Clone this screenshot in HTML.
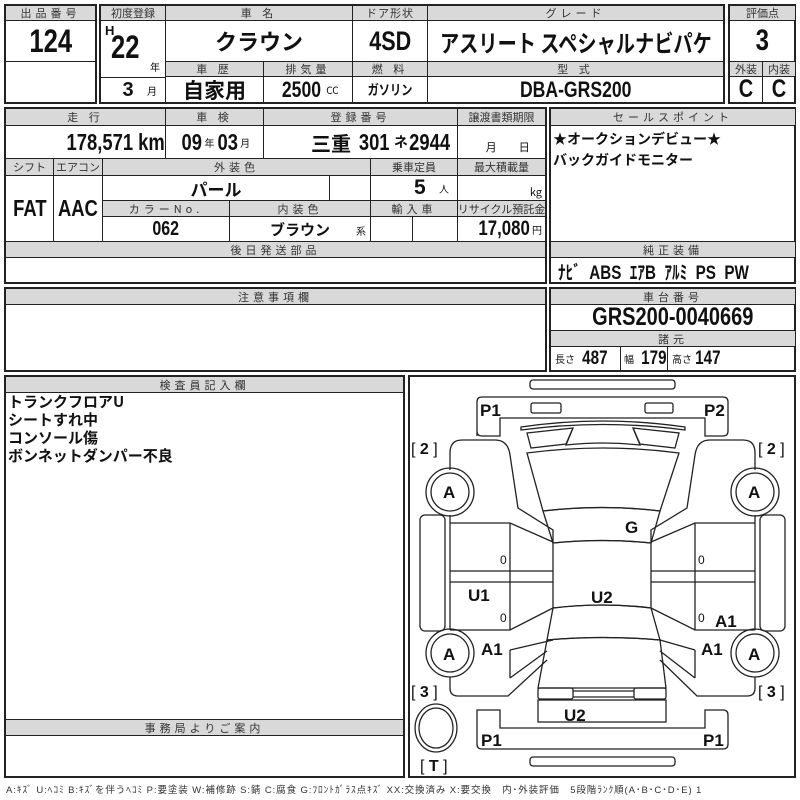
<!DOCTYPE html>
<html><head><meta charset="utf-8"><style>
*{margin:0;padding:0}
body{width:800px;height:800px;background:#fff;position:relative;overflow:hidden;font-family:"Liberation Sans","Noto Sans CJK JP",sans-serif;color:#111}
.c{position:absolute;border:1px solid #222;box-sizing:border-box;display:flex;align-items:center;justify-content:center;overflow:hidden;white-space:nowrap}
.h{background:#d9d9d9;font-size:11px;letter-spacing:4px;color:#333;font-family:"Noto Sans CJK JP",sans-serif}
.b{font-family:"Liberation Sans","Noto Sans CJK JP",sans-serif;font-weight:bold}
.n{display:inline-block;transform:scaleX(.8)}
.j{font-family:"Noto Sans CJK JP",sans-serif;font-weight:bold}
.s{font-size:10px;font-weight:normal;font-family:"Noto Sans CJK JP",sans-serif}
.o{position:absolute;border:2px solid #222;box-sizing:border-box}
</style></head><body>

<div class="o" style="left:4px;top:4px;width:93px;height:100px"></div>
<div class="c h" style="left:5px;top:5px;width:91px;height:16px">出品番号</div>
<div class="c b" style="left:5px;top:20px;width:91px;height:42px;font-size:32px"><span class="n">124</span></div>
<div class="c" style="left:5px;top:61px;width:91px;height:42px"></div>

<div class="o" style="left:99px;top:4px;width:626px;height:100px"></div>
<div class="c h" style="left:100px;top:5px;width:66px;height:16px;letter-spacing:0">初度登録</div>
<div class="c h" style="left:165px;top:5px;width:188px;height:16px">車 名</div>
<div class="c h" style="left:352px;top:5px;width:76px;height:16px;letter-spacing:1px">ドア形状</div>
<div class="c h" style="left:427px;top:5px;width:297px;height:16px">グレード</div>
<div class="c" style="left:100px;top:20px;width:66px;height:58px;display:block">
 <span class="b" style="position:absolute;left:4px;top:2px;font-size:13px">H</span>
 <span class="b n" style="position:absolute;left:10px;top:8px;font-size:32px;transform-origin:left">22</span>
 <span class="s" style="position:absolute;left:49px;top:38px">年</span></div>
<div class="c j" style="left:165px;top:20px;width:188px;height:42px;font-size:22px">クラウン</div>
<div class="c b" style="left:352px;top:20px;width:76px;height:42px;font-size:27px"><span class="n">4SD</span></div>
<div class="c j" style="left:427px;top:20px;width:297px;height:42px;font-size:24px"><span style="display:inline-block;transform:scaleX(0.8)">アスリート スペシャルナビパケ</span></div>
<div class="c h" style="left:165px;top:61px;width:99px;height:16px">車 歴</div>
<div class="c h" style="left:263px;top:61px;width:90px;height:16px">排気量</div>
<div class="c h" style="left:352px;top:61px;width:76px;height:16px">燃 料</div>
<div class="c h" style="left:427px;top:61px;width:297px;height:16px">型 式</div>
<div class="c" style="left:100px;top:77px;width:66px;height:26px;justify-content:flex-end;padding-right:8px"><span class="b" style="font-size:20px">3</span>&nbsp;&nbsp;&nbsp;<span class="s">月</span></div>
<div class="c j" style="left:165px;top:76px;width:99px;height:27px;font-size:21px">自家用</div>
<div class="c" style="left:263px;top:76px;width:90px;height:27px"><span class="b n" style="font-size:22px">2500</span><span class="s">CC</span></div>
<div class="c j" style="left:352px;top:76px;width:76px;height:27px;font-size:14px"><span style="transform:scaleX(.8);display:inline-block">ガソリン</span></div>
<div class="c b" style="left:427px;top:76px;width:297px;height:27px;font-size:22px"><span class="n">DBA-GRS200</span></div>

<div class="o" style="left:728px;top:4px;width:68px;height:100px"></div>
<div class="c h" style="left:729px;top:5px;width:67px;height:16px;letter-spacing:0">評価点</div>
<div class="c b" style="left:729px;top:20px;width:67px;height:42px;font-size:30px"><span class="n">3</span></div>
<div class="c h" style="left:729px;top:61px;width:34px;height:16px;letter-spacing:0">外装</div>
<div class="c h" style="left:762px;top:61px;width:34px;height:16px;letter-spacing:0">内装</div>
<div class="c b" style="left:729px;top:76px;width:34px;height:27px;font-size:25px"><span class="n">C</span></div>
<div class="c b" style="left:762px;top:76px;width:34px;height:27px;font-size:25px"><span class="n">C</span></div>

<div class="o" style="left:4px;top:107px;width:543px;height:177px"></div>
<div class="c h" style="left:5px;top:108px;width:161px;height:18px">走 行</div>
<div class="c h" style="left:165px;top:108px;width:99px;height:18px">車 検</div>
<div class="c h" style="left:263px;top:108px;width:195px;height:18px">登録番号</div>
<div class="c h" style="left:457px;top:108px;width:89px;height:18px;letter-spacing:0">譲渡書類期限</div>
<div class="c b" style="left:5px;top:125px;width:161px;height:34px;font-size:23px;justify-content:flex-end;padding-right:0"><span class="n" style="transform-origin:right">178,571 km</span></div>
<div class="c" style="left:165px;top:125px;width:99px;height:34px"><span class="b n" style="font-size:23px">09</span><span class="s">年</span><span class="b n" style="font-size:23px">03</span><span class="s">月</span></div>
<div class="c" style="left:263px;top:125px;width:195px;height:34px;justify-content:flex-end;padding-right:2px"><span class="j" style="font-size:20px">三重</span>&nbsp;<span class="b n" style="font-size:23px">301</span><span class="j" style="font-size:14px">ネ</span><span class="b n" style="font-size:23px;margin-left:-4px">2944</span></div>
<div class="c s" style="left:457px;top:125px;width:89px;height:34px;align-items:flex-end;padding-bottom:3px;font-size:11px">&nbsp;&nbsp;&nbsp;&nbsp;&nbsp;月&nbsp;&nbsp;&nbsp;&nbsp;&nbsp;&nbsp;&nbsp;&nbsp;&nbsp;日</div>
<div class="c h" style="left:5px;top:158px;width:49px;height:18px;letter-spacing:0">シフト</div>
<div class="c h" style="left:53px;top:158px;width:50px;height:18px;letter-spacing:0">エアコン</div>
<div class="c h" style="left:102px;top:158px;width:269px;height:18px">外装色</div>
<div class="c h" style="left:370px;top:158px;width:88px;height:18px;letter-spacing:0">乗車定員</div>
<div class="c h" style="left:457px;top:158px;width:89px;height:18px;letter-spacing:0">最大積載量</div>
<div class="c b" style="left:5px;top:175px;width:49px;height:67px;font-size:23px"><span class="n">FAT</span></div>
<div class="c b" style="left:53px;top:175px;width:50px;height:67px;font-size:23px"><span class="n">AAC</span></div>
<div class="c j" style="left:102px;top:175px;width:228px;height:26px;font-size:17px">パール</div>
<div class="c" style="left:329px;top:175px;width:42px;height:26px"></div>
<div class="c" style="left:370px;top:175px;width:88px;height:26px;justify-content:flex-end;padding-right:8px"><span class="b" style="font-size:21px">5</span>&nbsp;&nbsp;&nbsp;<span class="s">人</span></div>
<div class="c s" style="left:457px;top:175px;width:89px;height:26px;justify-content:flex-end;padding-right:3px;align-items:flex-end;font-size:11px">kg</div>
<div class="c h" style="left:102px;top:200px;width:128px;height:17px">カラーNo.</div>
<div class="c h" style="left:229px;top:200px;width:142px;height:17px">内装色</div>
<div class="c h" style="left:370px;top:200px;width:88px;height:17px">輸入車</div>
<div class="c h" style="left:457px;top:200px;width:89px;height:17px;letter-spacing:0">リサイクル預託金</div>
<div class="c b" style="left:102px;top:216px;width:128px;height:26px;font-size:20px"><span class="n">062</span></div>
<div class="c" style="left:229px;top:216px;width:142px;height:26px"><span class="j" style="font-size:15px">ブラウン</span><span class="s" style="position:absolute;right:4px;bottom:3px">系</span></div>
<div class="c" style="left:370px;top:216px;width:43px;height:26px"></div>
<div class="c" style="left:412px;top:216px;width:46px;height:26px"></div>
<div class="c" style="left:457px;top:216px;width:89px;height:26px;justify-content:flex-end;padding-right:3px"><span class="b n" style="font-size:21px;margin-right:-4px">17,080</span><span class="s">円</span></div>
<div class="c h" style="left:5px;top:241px;width:541px;height:17px">後日発送部品</div>

<div class="o" style="left:549px;top:107px;width:247px;height:177px"></div>
<div class="c h" style="left:550px;top:108px;width:246px;height:18px">セールスポイント</div>
<div class="j" style="position:absolute;left:553px;top:129px;font-size:14px;line-height:21px">★オークションデビュー★<br>バックガイドモニター</div>
<div class="c h" style="left:550px;top:241px;width:246px;height:17px">純正装備</div>
<div class="b n" style="position:absolute;left:558px;top:258px;font-size:19px;white-space:nowrap;transform-origin:left">ﾅﾋﾞ&nbsp; ABS&nbsp; ｴｱB&nbsp; ｱﾙﾐ&nbsp; PS&nbsp; PW</div>

<div class="o" style="left:4px;top:287px;width:543px;height:85px"></div>
<div class="c h" style="left:5px;top:288px;width:541px;height:17px">注意事項欄</div>
<div class="o" style="left:549px;top:287px;width:247px;height:85px"></div>
<div class="c h" style="left:550px;top:288px;width:246px;height:17px">車台番号</div>
<div class="c b" style="left:550px;top:304px;width:246px;height:27px;font-size:25px"><span class="n">GRS200-0040669</span></div>
<div class="c h" style="left:550px;top:330px;width:246px;height:17px">諸元</div>
<div class="c" style="left:550px;top:346px;width:71px;height:25px;justify-content:flex-start;padding-left:4px"><span class="s">長さ</span>&nbsp;<span class="b n" style="font-size:19px">487</span></div>
<div class="c" style="left:620px;top:346px;width:48px;height:25px;justify-content:flex-start;padding-left:3px"><span class="s">幅</span>&nbsp;<span class="b n" style="font-size:19px">179</span></div>
<div class="c" style="left:667px;top:346px;width:129px;height:25px;justify-content:flex-start;padding-left:4px"><span class="s">高さ</span><span class="b n" style="font-size:19px">147</span></div>

<div class="o" style="left:4px;top:375px;width:401px;height:403px"></div>
<div class="c h" style="left:5px;top:376px;width:399px;height:17px">検査員記入欄</div>
<div class="j" style="position:absolute;left:8px;top:393px;font-size:15px;line-height:18px">トランクフロアU<br>シートすれ中<br>コンソール傷<br>ボンネットダンパー不良</div>
<div class="c h" style="left:5px;top:719px;width:399px;height:17px">事務局よりご案内</div>

<div class="o" style="left:408px;top:375px;width:388px;height:403px"></div>
<svg style="position:absolute;left:0;top:0" width="800" height="800" fill="none" stroke="#222" stroke-width="1.3">
<rect x="530" y="380" width="145" height="9" rx="3"/>
<path d="M477,436 L477,402 Q477,397 482,397 L723,397 Q728,397 728,402 L728,431 Q728,436 723,436 L705,436 L705,418 L500,418 L500,436 L482,436 Q477,436 477,431 Z"/>
<rect x="531" y="403" width="30" height="10" rx="2"/><rect x="645" y="403" width="28" height="10" rx="2"/>
<path d="M521,427 Q603,415 685,427 L685,430 Q603,419 521,430 Z"/>
<path d="M527,433 L573,428 L566,444 L531,448 Z"/><path d="M633,428 L679,433 L675,448 L640,444 Z"/>
<path d="M573,428 L566,445 Q603,441 640,445 L633,428"/>
<path d="M527,453 Q603,443 679,453 L660,511 Q603,504 543,511 Z"/>
<path d="M543,511 Q603,504 660,511 L651,543 Q603,538 553,543 Z"/>
<path d="M553,543 Q603,538 651,543 L651,608 Q603,602 553,608 Z"/>
<path d="M553,608 Q603,602 651,608 L660,640 Q603,635 547,640 Z"/>
<path d="M547,640 Q603,635 660,640 L666,688 L538,688 Z"/>
<rect x="538" y="688" width="35" height="11" rx="2"/><rect x="634" y="688" width="32" height="11" rx="2"/>
<path d="M573,691 L634,691 M573,697 L634,697"/>
<rect x="538" y="700" width="128" height="22"/>
<path d="M477,710 L477,744 Q477,749 482,749 L723,749 Q728,749 728,744 L728,715 Q728,710 723,710 L705,710 L705,728 L500,728 L500,710 Z"/>
<rect x="530" y="757" width="145" height="9" rx="3"/>
<path d="M450,470 L450,453 Q450,440 462,440 L495,440 Q508,440 510,455 L518,508 L553,530 L553,543"/>
<path d="M450,515 L450,630"/>
<path d="M450,523 L510,523 L553,542 M450,571 L553,571 M450,582 L553,582 M450,630 L510,630 L553,608 M510,523 L510,630"/>
<path d="M450,677 L450,688 Q450,696 458,696 L508,696 L547,660 M510,678 L547,651 M510,650 L510,678"/>
<path d="M510,650 L553,640"/>
<rect x="420" y="515" width="25" height="116" rx="5"/>
<path d="M755,470 L755,453 Q755,440 743,440 L710,440 Q697,440 695,455 L687,508 L651,530 L651,543"/>
<path d="M755,515 L755,630"/>
<path d="M755,523 L695,523 L651,542 M755,571 L651,571 M755,582 L651,582 M755,630 L695,630 L651,608 M695,523 L695,630"/>
<path d="M755,677 L755,688 Q755,696 747,696 L697,696 L660,660 M695,678 L660,651 M695,650 L695,678"/>
<path d="M695,650 L660,640"/>
<rect x="760" y="515" width="25" height="116" rx="5"/>
<circle cx="450" cy="492" r="24"/><circle cx="450" cy="492" r="19"/>
<circle cx="755" cy="492" r="24"/><circle cx="755" cy="492" r="19"/>
<circle cx="450" cy="653" r="24"/><circle cx="450" cy="653" r="19"/>
<circle cx="755" cy="653" r="24"/><circle cx="755" cy="653" r="19"/>
<ellipse cx="436" cy="728" rx="21" ry="24"/><ellipse cx="436" cy="728" rx="17" ry="20"/>
<g fill="#111" stroke="none" font-family="Liberation Sans,sans-serif" font-weight="bold" font-size="17">
<text x="480" y="416">P1</text><text x="704" y="416">P2</text>
<text x="481" y="746">P1</text><text x="703" y="746">P1</text>
<text x="443" y="498">A</text><text x="748" y="498">A</text><text x="443" y="660">A</text><text x="748" y="660">A</text>
<text x="625" y="533">G</text><text x="468" y="601">U1</text><text x="591" y="603">U2</text><text x="564" y="721">U2</text>
<text x="481" y="655">A1</text><text x="715" y="627">A1</text><text x="701" y="655">A1</text>
<text x="411" y="454" font-weight="normal" font-size="16">[ <tspan font-weight="bold">2</tspan> ]</text>
<text x="758" y="454" font-weight="normal" font-size="16">[ <tspan font-weight="bold">2</tspan> ]</text>
<text x="411" y="697" font-weight="normal" font-size="16">[ <tspan font-weight="bold">3</tspan> ]</text>
<text x="758" y="697" font-weight="normal" font-size="16">[ <tspan font-weight="bold">3</tspan> ]</text>
<text x="420" y="771" font-weight="normal" font-size="16">[ <tspan font-weight="bold">T</tspan> ]</text>
<text x="500" y="564" font-size="12" font-weight="normal">0</text><text x="500" y="622" font-size="12" font-weight="normal">0</text>
<text x="698" y="564" font-size="12" font-weight="normal">0</text><text x="698" y="622" font-size="12" font-weight="normal">0</text>
</g>
</svg>

<div style="position:absolute;left:6px;top:782px;font-size:9.5px;color:#333;white-space:nowrap;font-family:'Liberation Sans','Noto Sans CJK JP',sans-serif;letter-spacing:0.9px">A:ｷｽﾞ U:ﾍｺﾐ B:ｷｽﾞを伴うﾍｺﾐ P:要塗装 W:補修跡 S:錆 C:腐食 G:ﾌﾛﾝﾄｶﾞﾗｽ点ｷｽﾞ XX:交換済み X:要交換　内･外装評価　5段階ﾗﾝｸ順(A･B･C･D･E) 1</div>
</body></html>
